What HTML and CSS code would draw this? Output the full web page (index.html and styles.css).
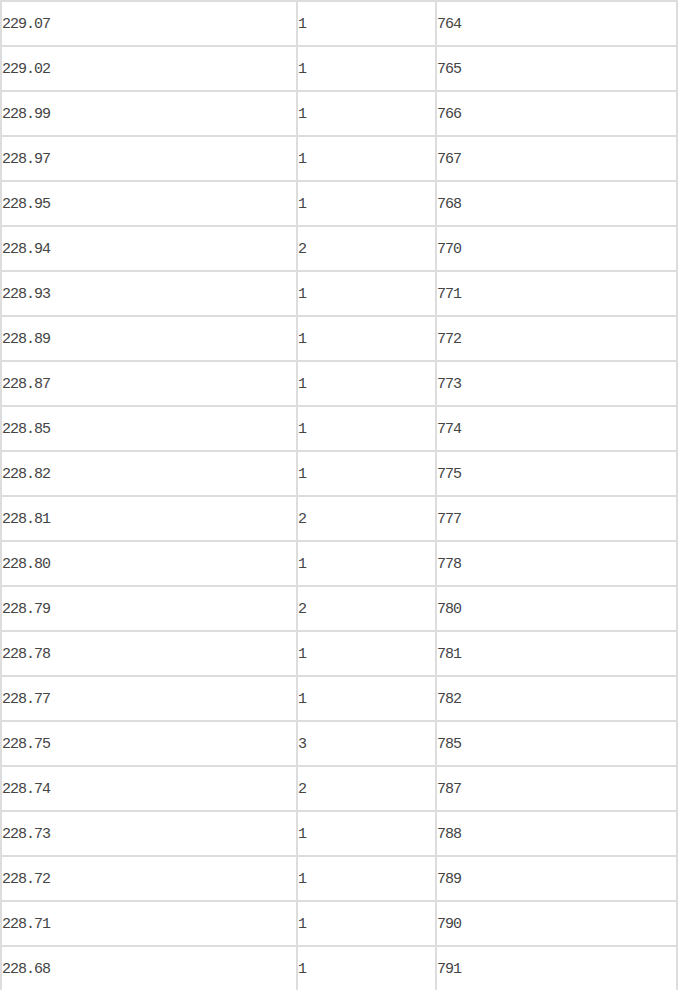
FILE: index.html
```html
<!DOCTYPE html>
<html lang="zh">
<head>
<meta charset="utf-8">
<title>价格表</title>
<link rel="stylesheet" href="styles.css">
</head>
<body>
<table class="data">
<tbody>
<tr><td class="c1">229.07</td><td class="c2">1</td><td class="c3">764</td></tr>
<tr><td class="c1">229.02</td><td class="c2">1</td><td class="c3">765</td></tr>
<tr><td class="c1">228.99</td><td class="c2">1</td><td class="c3">766</td></tr>
<tr><td class="c1">228.97</td><td class="c2">1</td><td class="c3">767</td></tr>
<tr><td class="c1">228.95</td><td class="c2">1</td><td class="c3">768</td></tr>
<tr><td class="c1">228.94</td><td class="c2">2</td><td class="c3">770</td></tr>
<tr><td class="c1">228.93</td><td class="c2">1</td><td class="c3">771</td></tr>
<tr><td class="c1">228.89</td><td class="c2">1</td><td class="c3">772</td></tr>
<tr><td class="c1">228.87</td><td class="c2">1</td><td class="c3">773</td></tr>
<tr><td class="c1">228.85</td><td class="c2">1</td><td class="c3">774</td></tr>
<tr><td class="c1">228.82</td><td class="c2">1</td><td class="c3">775</td></tr>
<tr><td class="c1">228.81</td><td class="c2">2</td><td class="c3">777</td></tr>
<tr><td class="c1">228.80</td><td class="c2">1</td><td class="c3">778</td></tr>
<tr><td class="c1">228.79</td><td class="c2">2</td><td class="c3">780</td></tr>
<tr><td class="c1">228.78</td><td class="c2">1</td><td class="c3">781</td></tr>
<tr><td class="c1">228.77</td><td class="c2">1</td><td class="c3">782</td></tr>
<tr><td class="c1">228.75</td><td class="c2">3</td><td class="c3">785</td></tr>
<tr><td class="c1">228.74</td><td class="c2">2</td><td class="c3">787</td></tr>
<tr><td class="c1">228.73</td><td class="c2">1</td><td class="c3">788</td></tr>
<tr><td class="c1">228.72</td><td class="c2">1</td><td class="c3">789</td></tr>
<tr><td class="c1">228.71</td><td class="c2">1</td><td class="c3">790</td></tr>
<tr><td class="c1">228.68</td><td class="c2">1</td><td class="c3">791</td></tr>
</tbody>
</table>
</body>
</html>
```
FILE: styles.css
```css
html, body {
  margin: 0;
  padding: 0;
  background: #fff;
}
.data {
  border-collapse: separate;
  border-spacing: 0;
  border: 1px solid #dddddd;
  table-layout: fixed;
  width: 678px;
  font-family: "Liberation Mono", "DejaVu Sans Mono", monospace;
  font-size: 15px;
  letter-spacing: -1px;
  color: #444444;
}
.data td {
  border: 1px solid #dddddd;
  padding: 2px 0 0 0;
  height: 41px;
  vertical-align: middle;
  text-align: left;
  white-space: nowrap;
}
.c1 { width: 294px; }
.c2 { width: 137px; }
.c3 { width: 239px; }
```
